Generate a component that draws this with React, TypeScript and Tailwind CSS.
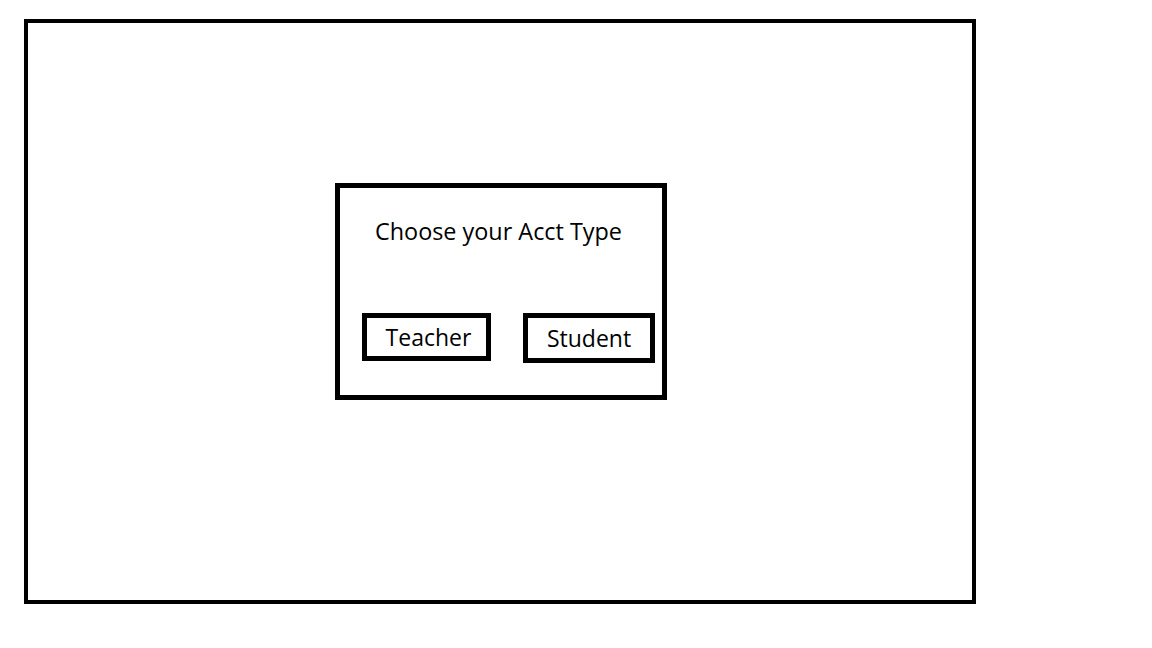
export default function App() {
  return (
    <div className="w-[1152px] h-[648px] bg-white overflow-hidden" style={{ fontFamily: '"Open Sans", "Noto Sans", sans-serif' }}>
      <div className="ml-[24px] pt-[19px]">
        <div className="w-[952px] h-[585px] border-4 border-black">
          <div className="ml-[307px] mt-[160px] w-[332px] h-[217px] border-[5px] border-black flex flex-col">
            <div className="pl-[35px] pt-[28px] text-[23.4px] leading-[30px] text-black">Choose your Acct Type</div>
            <div className="flex pl-[22px] mt-[67px]">
              <div className="w-[129px] h-[48px] border-[5px] border-black flex items-center justify-center text-[23px] text-black pl-[4px]">Teacher</div>
              <div className="w-[132px] h-[50px] ml-[32px] border-[5px] border-black flex items-center justify-center text-[23px] text-black">Student</div>
            </div>
          </div>
        </div>
      </div>
    </div>
  );
}
